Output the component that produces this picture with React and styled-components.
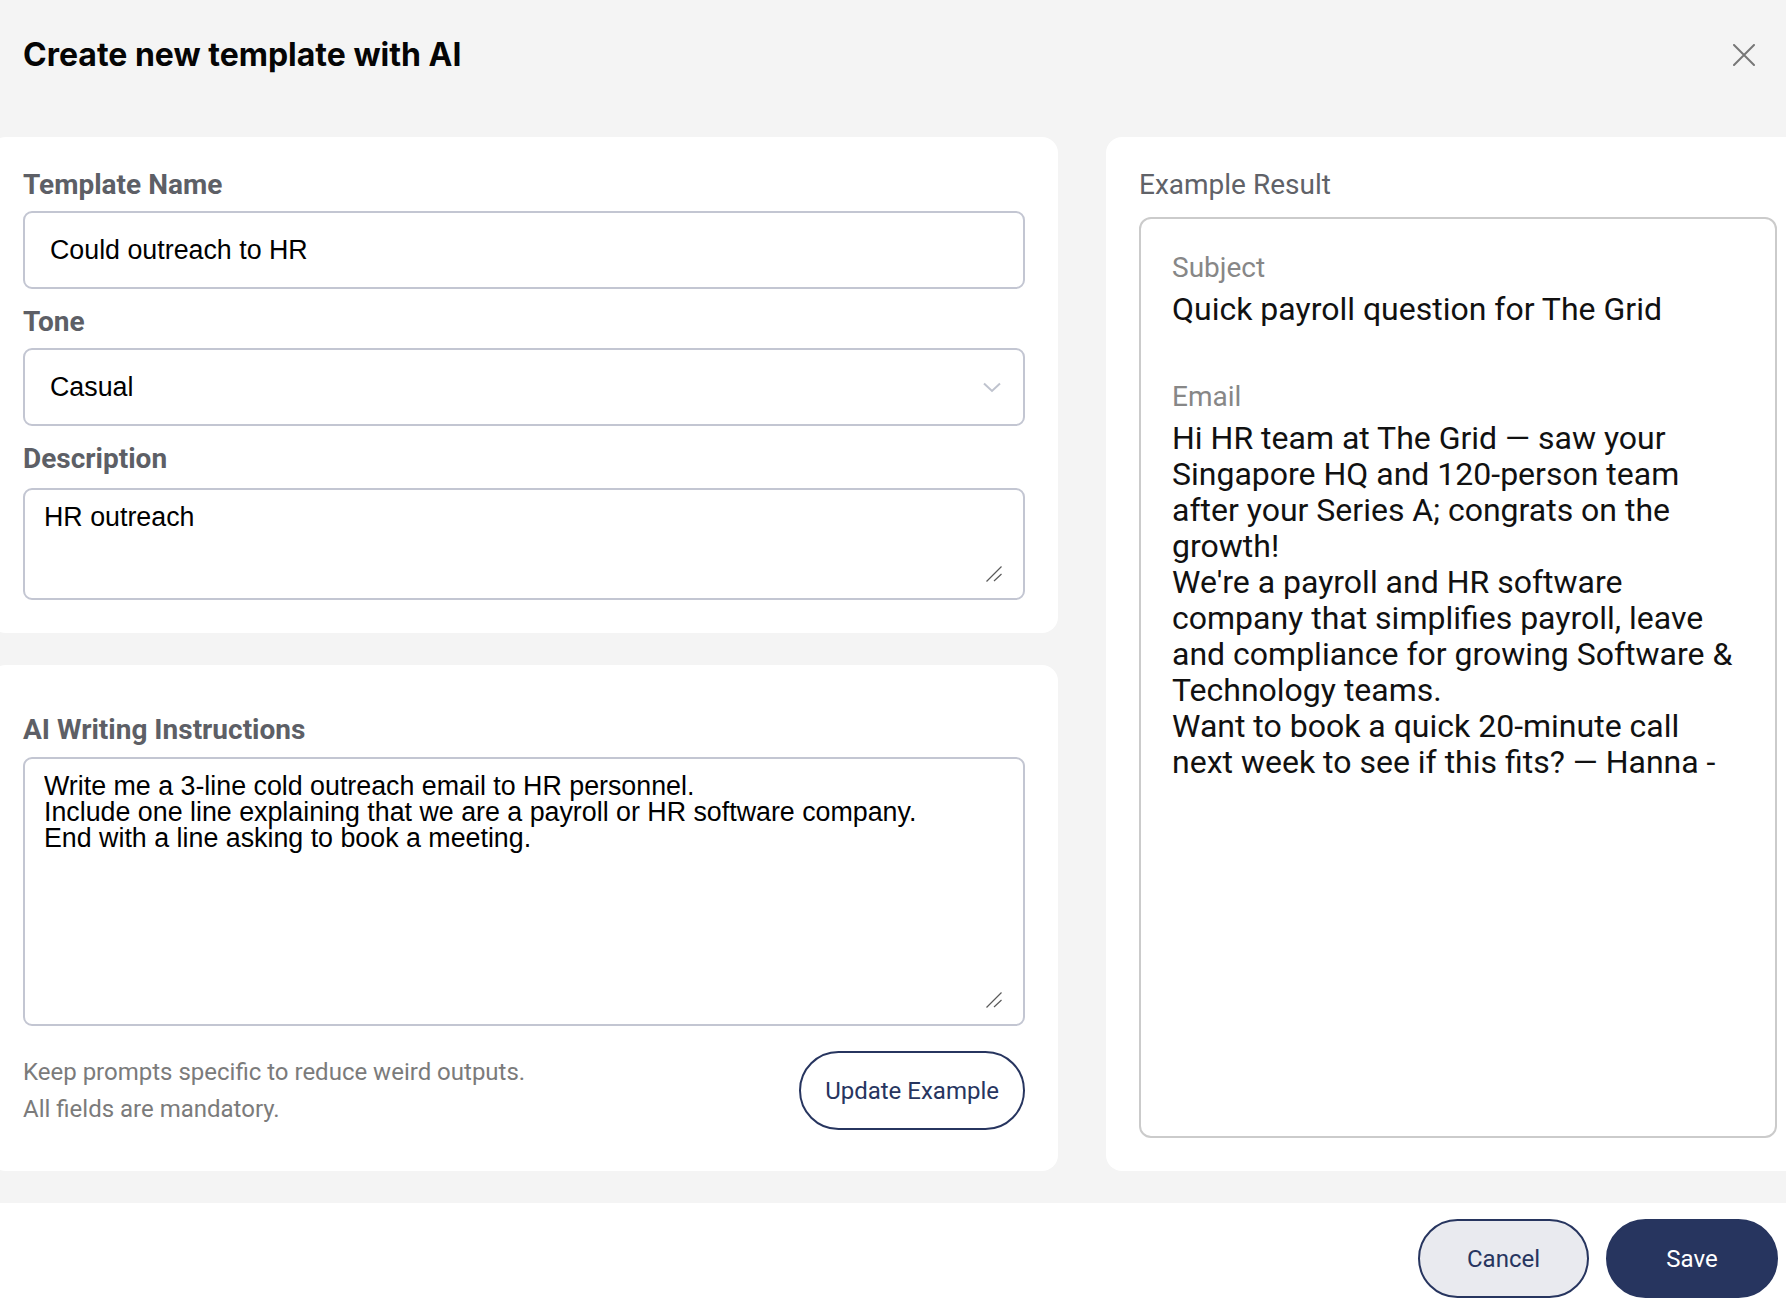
import React from "react";
import styled, { createGlobalStyle } from "styled-components";

const navy = "#27355f";

const GlobalStyle = createGlobalStyle`
  html, body { margin: 0; padding: 0; background: #ffffff; overflow: hidden; }
  body { font-family: Roboto, "Liberation Sans", sans-serif; }
  * { box-sizing: border-box; }
`;

const Page = styled.div`
  width: 1820px;
  margin-left: -10px;
  min-height: 1316px;
  background: #f4f4f4;
  display: flex;
  flex-direction: column;
`;

const Header = styled.header`
  height: 110px;
  display: flex;
  align-items: center;
  justify-content: space-between;
  padding: 0 46px 0 33px;
`;

const Title = styled.h1`
  margin: 0;
  font-family: Inter, Roboto, sans-serif;
  font-weight: 700;
  font-size: 32px;
  line-height: 40px;
  color: #050505;
`;

const CloseButton = styled.button`
  width: 40px;
  height: 40px;
  border: none;
  background: transparent;
  padding: 0;
  display: flex;
  align-items: center;
  justify-content: center;
  cursor: pointer;
`;

const Main = styled.main`
  display: flex;
  gap: 48px;
  padding: 27px 0 32px 0;
`;

const LeftColumn = styled.div`
  width: 1068px;
  display: flex;
  flex-direction: column;
  gap: 32px;
`;

const Card = styled.section`
  background: #ffffff;
  border-radius: 16px;
  padding: ${(p) => p.$pad};
  display: flex;
  flex-direction: column;
`;

const RightCard = styled(Card)`
  width: 704px;
`;

const Label = styled.label`
  display: block;
  font-family: Roboto, sans-serif;
  font-weight: ${(p) => (p.$light ? 400 : 700)};
  font-size: 28px;
  line-height: 30px;
  color: ${(p) => (p.$light ? "#606268" : "#5d5f66")};
  margin-bottom: ${(p) => p.$mb || "11px"};
`;

const Field = styled.div`
  display: flex;
  flex-direction: column;
  margin-bottom: ${(p) => p.$mb || "18px"};
`;

const TextInput = styled.input`
  width: 100%;
  height: 78px;
  border: 2px solid #c3c6d2;
  border-radius: 9px;
  padding: 0 25px;
  font-family: "Liberation Sans", Arial, sans-serif;
  font-size: 26.8px;
  color: #000;
  background: #fff;
  outline: none;
`;

const SelectBox = styled.div`
  width: 100%;
  height: 78px;
  border: 2px solid #c3c6d2;
  border-radius: 9px;
  padding: 0 22px 0 25px;
  display: flex;
  align-items: center;
  justify-content: space-between;
  font-family: "Liberation Sans", Arial, sans-serif;
  font-size: 26.8px;
  color: #000;
  background: #fff;
`;

const TextAreaFrame = styled.div`
  position: relative;
  width: 100%;
  height: ${(p) => p.$h};
  border: 2px solid #c3c6d2;
  border-radius: 9px;
  padding: 14px 20px 16px 19px;
  background: #fff;
  display: flex;
`;

const TextArea = styled.textarea`
  flex: 1;
  width: 100%;
  height: 100%;
  border: none;
  padding: 0;
  margin: 0;
  font-family: "Liberation Sans", Arial, sans-serif;
  font-size: 26.8px;
  line-height: 26px;
  color: #000;
  background: transparent;
  outline: none;
  resize: none;
  display: block;
`;

const ResizeGrip = styled.svg`
  position: absolute;
  right: 21px;
  bottom: 16px;
  pointer-events: none;
`;

const HelperRow = styled.div`
  margin-top: 25px;
  display: flex;
  align-items: center;
  justify-content: space-between;
`;

const HelperText = styled.div`
  font-family: Roboto, sans-serif;
  font-size: 24px;
  line-height: 37px;
  color: #7b7b7b;
`;

const PillButton = styled.button`
  height: 79px;
  min-width: ${(p) => p.$w || "auto"};
  padding: 0 24px;
  border-radius: 40px;
  border: 2px solid ${navy};
  background: ${(p) =>
    p.$variant === "primary" ? navy : p.$variant === "soft" ? "#e9eaef" : "#ffffff"};
  color: ${(p) => (p.$variant === "primary" ? "#ffffff" : navy)};
  font-family: Roboto, sans-serif;
  font-size: 24px;
  font-weight: 400;
  cursor: pointer;
`;

const ResultBox = styled.div`
  flex: 1;
  border: 2px solid #cbcbcb;
  border-radius: 12px;
  padding: 34px 31px;
  display: flex;
  flex-direction: column;
`;

const ResultLabel = styled.div`
  font-family: Roboto, sans-serif;
  font-size: 28px;
  line-height: 30px;
  color: #878787;
  margin-bottom: 8px;
`;

const ResultValue = styled.div`
  font-family: Roboto, sans-serif;
  font-size: 32px;
  line-height: 36px;
  color: #111111;
  white-space: pre-line;
  margin-bottom: ${(p) => p.$mb || "0"};
`;

const Footer = styled.footer`
  height: 113px;
  background: #ffffff;
  display: flex;
  justify-content: flex-end;
  align-items: flex-start;
  gap: 17px;
  padding: 16px 32px 0 0;
`;

const CloseIcon = () => (
  <svg width="22" height="22" viewBox="0 0 22 22" fill="none">
    <path d="M1 1 L21 21 M21 1 L1 21" stroke="#777777" strokeWidth="2" strokeLinecap="round" />
  </svg>
);

const Chevron = () => (
  <svg width="18" height="11" viewBox="0 0 18 11" fill="none">
    <path d="M1 1.5 L9 9 L17 1.5" stroke="#bfc3ce" strokeWidth="2" />
  </svg>
);

const Grip = () => (
  <ResizeGrip width="16" height="16" viewBox="0 0 16 16" fill="none">
    <path d="M0.5 15.5 L15.5 0.5 M8 15 L15.5 8" stroke="#5a5a5a" strokeWidth="1.2" />
  </ResizeGrip>
);

const emailBody =
  "Hi HR team at The Grid \u2014 saw your Singapore HQ and 120-person team after your Series A; congrats on the growth!\nWe're a payroll and HR software company that simplifies payroll, leave and compliance for growing Software & Technology teams.\nWant to book a quick 20-minute call next week to see if this fits? \u2014 Hanna -";

const instructions =
  "Write me a 3-line cold outreach email to HR personnel.\nInclude one line explaining that we are a payroll or HR software company.\nEnd with a line asking to book a meeting.";

export default function App() {
  return (
    <>
      <GlobalStyle />
      <Page>
        <Header>
          <Title>Create new template with AI</Title>
          <CloseButton aria-label="Close">
            <CloseIcon />
          </CloseButton>
        </Header>
        <Main>
          <LeftColumn>
            <Card $pad="33px 33px 33px 33px">
              <Field>
                <Label>Template Name</Label>
                <TextInput defaultValue="Could outreach to HR" />
              </Field>
              <Field>
                <Label>Tone</Label>
                <SelectBox>
                  <span>Casual</span>
                  <Chevron />
                </SelectBox>
              </Field>
              <Field $mb="0">
                <Label $mb="14px">Description</Label>
                <TextAreaFrame $h="112px">
                  <TextArea defaultValue="HR outreach" />
                  <Grip />
                </TextAreaFrame>
              </Field>
            </Card>
            <Card $pad="50px 33px 41px 33px">
              <Field $mb="0">
                <Label $mb="12px">AI Writing Instructions</Label>
                <TextAreaFrame $h="269px">
                  <TextArea defaultValue={instructions} />
                  <Grip />
                </TextAreaFrame>
              </Field>
              <HelperRow>
                <HelperText>
                  <div>Keep prompts specific to reduce weird outputs.</div>
                  <div>All fields are mandatory.</div>
                </HelperText>
                <PillButton $variant="outline">Update Example</PillButton>
              </HelperRow>
            </Card>
          </LeftColumn>
          <RightCard $pad="33px 33px 33px 33px">
            <Label $light $mb="17px">Example Result</Label>
            <ResultBox>
              <ResultLabel>Subject</ResultLabel>
              <ResultValue $mb="55px">Quick payroll question for The Grid</ResultValue>
              <ResultLabel>Email</ResultLabel>
              <ResultValue>{emailBody}</ResultValue>
            </ResultBox>
          </RightCard>
        </Main>
        <Footer>
          <PillButton $variant="soft" $w="171px">Cancel</PillButton>
          <PillButton $variant="primary" $w="172px">Save</PillButton>
        </Footer>
      </Page>
    </>
  );
}
